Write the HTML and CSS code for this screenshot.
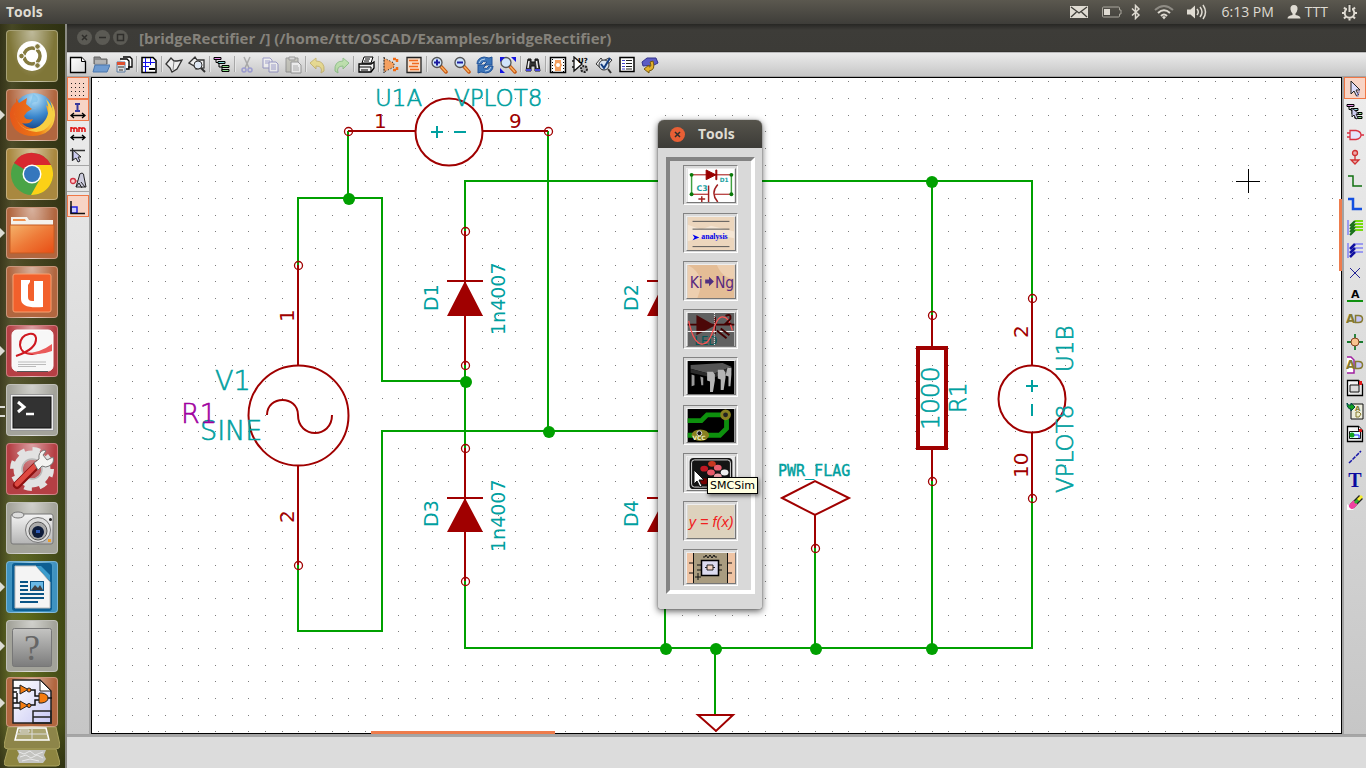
FILE: index.html
```html
<!DOCTYPE html>
<html lang="en">
<head>
<meta charset="utf-8">
<title>Tools</title>
<link rel="stylesheet" href="styles.css">
</head>
<body>
<svg class="defs" aria-hidden="true">
  <defs>
    <linearGradient id="gOrange" x1="0" y1="0" x2="1" y2="1"><stop offset="0" stop-color="#f5b26a"/><stop offset=".5" stop-color="#ee7a38"/><stop offset="1" stop-color="#e84d14"/></linearGradient>
    <linearGradient id="gGray" x1="0" y1="0" x2="0" y2="1"><stop offset="0" stop-color="#c4c4c2"/><stop offset="1" stop-color="#7c7c7c"/></linearGradient>
    <linearGradient id="gSilver" x1="0" y1="0" x2="0" y2="1"><stop offset="0" stop-color="#f4f4f4"/><stop offset="1" stop-color="#b4b4b4"/></linearGradient>
    <linearGradient id="gSheet" x1="0" y1="0" x2="1" y2="1"><stop offset="0" stop-color="#fff"/><stop offset="1" stop-color="#dcdcdc"/></linearGradient>
    <linearGradient id="gFox" x1="0" y1="0" x2="1" y2="0"><stop offset="0" stop-color="#e5571a"/><stop offset=".65" stop-color="#ee7a14"/><stop offset="1" stop-color="#f8d848"/></linearGradient>
    <radialGradient id="gGlobe" cx=".5" cy=".15" r=".9"><stop offset="0" stop-color="#b8e4fa"/><stop offset=".5" stop-color="#3a86cc"/><stop offset="1" stop-color="#0a2a6c"/></radialGradient>
    <linearGradient id="gPaper" x1="0" y1="0" x2="1" y2="1"><stop offset="0" stop-color="#fff"/><stop offset="1" stop-color="#c8c8f4"/></linearGradient>
    <pattern id="grid" x="98" y="81" width="50" height="50" patternUnits="userSpaceOnUse">
      <path fill="#7c7c7c" d="M0 0h1v1h-1zM17 0h1v1h-1zM34 0h1v1h-1zM0 17h1v1h-1zM17 17h1v1h-1zM34 17h1v1h-1zM0 34h1v1h-1zM17 34h1v1h-1zM34 34h1v1h-1z"/>
    </pattern>
    <symbol id="page" viewBox="0 0 18 18"><path d="M1.500 1.500h11l4 4v11h-15z" fill="url(#gSheet)" stroke="#000" stroke-width="1.300"/><path d="M12.500 1.500v4h4" fill="#fff" stroke="#000"/></symbol>
    <symbol id="arrow" viewBox="0 0 18 18"><path d="M5 1v13l3-3 2.500 5 2-1-2.500-5h4z" fill="#dcdcfa" stroke="#222"/><path d="M13 10v3l-2 1 1 3" fill="none" stroke="#8080c0"/></symbol>
    <symbol id="hier" viewBox="0 0 18 18"><path d="M3 4v2.500h3M6 8v3h3M9 11v4h1" fill="none" stroke="#000"/><path d="M1 1.500h7v2h-7z" fill="#e890e8" stroke="#000"/><path d="M5 5.500h7v2h-7z" fill="#8cdcdc" stroke="#000"/><path d="M9 9.500h7v2h-7zM9 13.500h7v2h-7z" fill="#8cdc8c" stroke="#000"/></symbol>
    <symbol id="lens" viewBox="0 0 18 18"><path d="M11 10.500l5 5.500" stroke="#c85a14" stroke-width="3.500" stroke-linecap="round"/><path d="M11 10.500l5 5.500" stroke="#f8b060" stroke-width="1.500"/><circle cx="7" cy="6.500" r="5" fill="#cfe4fa" stroke="#555" stroke-width="1.300"/></symbol>
    <symbol id="ad" viewBox="0 0 18 18"><text x="0" y="13" class="ad-a">A</text><path d="M9.500 5.500h3q4 0 4 3.500t-4 3.500h-3z" fill="#c4c4f6" stroke="#857a30" stroke-width="1.500"/></symbol>
  </defs>
</svg>

<header class="panel">
  <span class="panel-title">Tools</span>
  <div class="indicators">
    <svg width="18" height="12" viewBox="0 0 18 12" class="mail"><path fill="#dfdbd2" d="M0 0h18v12h-18z"/><path d="M1 1l8 6 8-6M1 11l5.500-5M17 11l-5.500-5" fill="none" stroke="#3f3e39" stroke-width="1.300"/></svg>
    <svg width="20" height="12" viewBox="0 0 20 12" class="battery"><path d="M1.500 1h15q1 0 1 1v2h1.500v4h-1.500v2q0 1-1 1h-15q-1 0-1-1v-8q0-1 1-1z" fill="none" stroke="#a9a69d"/><path fill="#dfdbd2" d="M2 3h6v6h-6z"/></svg>
    <svg width="10" height="16" viewBox="0 0 10 16"><path d="M1 4.500l7 6.500-3.500 3.500v-13l3.500 3.500-7 6.500" fill="none" stroke="#dfdbd2" stroke-width="1.500"/></svg>
    <svg width="20" height="16" viewBox="0 0 20 16"><g fill="none" stroke="#dfdbd2" stroke-width="2"><path d="M1 6q9-8 18 0" stroke="#8f8c85"/><path d="M4 9q6-5.500 12 0"/><path d="M7 12q3-3 6 0"/></g><path fill="#dfdbd2" d="M8 13l2-1 2 1-2 2.500z"/></svg>
    <svg width="20" height="16" viewBox="0 0 20 16" class="volume"><path fill="#dfdbd2" d="M0 5.500h3.500l4.500-4v13l-4.500-4h-3.500z"/><path d="M10 5q2.500 3 0 6M13 3q4 5 0 10M16 1q5 7 0 14" fill="none" stroke="#dfdbd2" stroke-width="1.500"/></svg>
    <span class="clock">6:13 PM</span>
    <span class="user"><svg width="14" height="14" viewBox="0 0 14 14"><path fill="#dfdbd2" d="M7 0q4 0 3.500 4.500-.5 2.500-2 4v1.500q5 .5 5 3.500h-13q0-3 5-3.500v-1.500q-1.500-1.500-2-4-.5-4.500 3.500-4.500z"/></svg>TTT</span>
    <svg width="17" height="17" viewBox="0 0 17 17"><circle cx="8.500" cy="9" r="4.800" fill="none" stroke="#dfdbd2" stroke-width="2"/><path d="M8.500 16.500v-2M1 9h2M16 9h-2M3 3.500l2 2M14 3.500l-2 2M3 14.500l2-2M14 14.500l-2-2" stroke="#dfdbd2" stroke-width="2"/><path d="M8.500 0v9" stroke="#46453f" stroke-width="5"/><path d="M8.500 1v7" stroke="#dfdbd2" stroke-width="2"/></svg>
  </div>
</header>

<div class="desktop">
  <nav class="launcher" aria-label="Launcher">
    <button class="tile olive" aria-label="Dash home"><svg viewBox="0 0 52 52"><circle cx="26" cy="26" r="15" fill="#fff"/><circle cx="26" cy="26" r="8" fill="none" stroke="#857b40" stroke-width="3.500"/><path d="M26 26h-12M26 26l6 10.500M26 26l6-10.500" stroke="#fff" stroke-width="1.500"/><g fill="#857b40" stroke="#fff" stroke-width="1"><circle cx="15.500" cy="26" r="2.800"/><circle cx="31.500" cy="16.500" r="2.800"/><circle cx="31.500" cy="35.500" r="2.800"/></g><circle cx="26" cy="26" r="5.500" fill="#fff"/></svg></button>
    <button class="tile copper run" aria-label="Firefox"><svg viewBox="0 0 52 52"><circle cx="28" cy="24" r="20" fill="url(#gGlobe)"/><path d="M27 5q7 3 4 8-7 0-5 5l5 2-8-1z" fill="#7cbfea" opacity=".7"/><path d="M10 9l3 5 8-5-1 6 6 5-5 3-3 4q2 5 9 3-3 6-11 4 5 6 13 5 14-2 13-15l-2-8q4 2 6 7 1-4-2-11 5 5 5 14-1 20-22 21-20 0-23-19-1-9 6-15z" fill="url(#gFox)"/><path d="M40 10q6 14-3 24-8 8-18 6 17 8 26-6 6-12-5-24z" fill="#f7cf43"/><path d="M8 22q3 18 20 20-16 0-20-20z" fill="#f6a04b"/></svg></button>
    <button class="tile gold" aria-label="Google Chrome"><svg viewBox="0 0 52 52"><circle cx="26" cy="26" r="21" fill="#4aa447"/><path d="M26 26L8 15a21 21 0 0 1 37 2h-19z" fill="#d8282f"/><path d="M26 17h19a21 21 0 0 1-20 30l9-16z" fill="#fcd116"/><circle cx="26" cy="26" r="9.500" fill="#fff"/><circle cx="26" cy="26" r="8" fill="#3577bd"/></svg></button>
    <button class="tile copper run" aria-label="Files"><svg viewBox="0 0 52 52"><path d="M5 10h16l2 3h24v8h-42z" fill="#f4f1ec"/><path d="M7 12h12l1 2h-13z" fill="#ef9150"/><path d="M4 18h44v28h-44z" fill="url(#gOrange)" stroke="#c75a20"/></svg></button>
    <button class="tile copper" aria-label="Ubuntu One"><svg viewBox="0 0 52 52"><rect x="7" y="8" width="38" height="38" rx="2" fill="#f2602c" stroke="#f9a070"/><path d="M15 14h9v2l-2 3v12q0 4 4 4h2v-20h9v26q-22 2-22-8z" fill="#fff"/></svg></button>
    <button class="tile red run" aria-label="Document viewer"><svg viewBox="0 0 52 52"><rect x="6" y="5" width="41" height="41" rx="5" fill="#f7f7f7" stroke="#fff"/><path d="M11 46.500h31" stroke="#555"/><path d="M10 31q21-7 20-18-1-5-7-4-9 2-9 11 1 9 12 9 10-1 19-6" fill="none" stroke="#cf1820" stroke-width="2"/><path d="M20 28q14 0 26-9v7q-12 5-26 2z" fill="#ea5a5a"/><path d="M12 37h28M12 39.500h28M12 41.500h18" stroke="#bbb"/></svg></button>
    <button class="tile silver two" aria-label="Terminal"><svg viewBox="0 0 52 52"><rect x="4.500" y="10.500" width="43" height="36" fill="#ededed" stroke="#999"/><rect x="7" y="13" width="38" height="31" fill="#323232" stroke="#111"/><path d="M12 18l6 5-6 5" fill="none" stroke="#fff" stroke-width="3"/><path d="M20 30h8" stroke="#fff" stroke-width="2.500"/></svg></button>
    <button class="tile red" aria-label="System settings"><svg viewBox="0 0 52 52"><g fill="none" stroke="#e2e2e2"><circle cx="26" cy="26" r="14" stroke-width="9"/><circle cx="26" cy="26" r="19.500" stroke-width="5" stroke-dasharray="7.600 7.700"/></g><circle cx="26" cy="26" r="10" fill="none" stroke="#b8b8b8" stroke-width="1.500"/><path d="M11 42l21-21" stroke="#8d1010" stroke-width="8" stroke-linecap="round"/><path d="M11 41l20-20" stroke="#df4a42" stroke-width="5" stroke-linecap="round"/><path d="M28 20l5-4q-1-7 5-9l2 1-3 4 4 5 6-3q2 6-4 9-3 2-7 0l-4 4z" fill="#f4f4f2" stroke="#777"/></svg></button>
    <button class="tile silver" aria-label="Camera"><svg viewBox="0 0 52 52"><rect x="5" y="12" width="42" height="30" rx="2" fill="url(#gSilver)" stroke="#777"/><ellipse cx="12" cy="13" rx="6" ry="3" fill="#ddd" stroke="#777"/><circle cx="32" cy="28" r="12.500" fill="#ddd" stroke="#777"/><circle cx="32" cy="29" r="9" fill="#aaa" stroke="#555"/><circle cx="32" cy="30" r="6" fill="#0c1a38"/><path d="M30 28h4v3h-4z" fill="#2b58b4"/><circle cx="44.500" cy="17.500" r="1.500" fill="#222"/><path d="M42 37h3v3h-3z" fill="#eda02d"/></svg></button>
    <button class="tile blue run" aria-label="LibreOffice Writer"><svg viewBox="0 0 52 52"><rect x="6" y="2" width="40" height="48" rx="3" fill="#0d5f93"/><path d="M9 5h21l14 16v26h-35z" fill="#f4f4f4" stroke="#bcbcbc"/><path d="M30 5l14 15v-6l-9-9z" fill="#3c9ccc"/><path d="M14 21h8M14 25h8M14 29h8M14 33h24M14 37h24M14 41h18" stroke="#0b5485" stroke-width="2"/><rect x="24.500" y="20.500" width="13" height="9" fill="#6ab9e6" stroke="#0b5485"/><path d="M25 29l4-5 3 3 2-3 3 5z" fill="#444"/></svg></button>
    <button class="tile silver run" aria-label="Unknown application"><svg viewBox="0 0 52 52"><rect x="6.500" y="8.500" width="39" height="38" rx="2" fill="url(#gGray)" stroke="#777"/><text x="26" y="40" class="question">?</text></svg></button>
    <button class="tile copper run eeschema" aria-label="Schematic editor"><svg viewBox="0 0 52 50"><path d="M7 3h27l11 11v32h-38z" fill="url(#gPaper)" stroke="#222" stroke-width="1.500"/><path d="M34 3v11h11z" fill="#fff" stroke="#222"/><path d="M7 11h7M7 15h4M7 26h4v-10M7 21h4M11 26h3M7 31h7M24 13h5v6h5M24 28h5v-5h5M41 21h5" fill="none" stroke="#111" stroke-width="1.500"/><path d="M14 8v9l8-4.500zM14 24v9l8-4.500zM33 16v10h3q6-1 6-5t-6-5z" fill="#f57c10" stroke="#222"/><circle cx="23" cy="13" r="2" fill="#f57c10" stroke="#222"/><circle cx="23" cy="28.500" r="2" fill="#f57c10" stroke="#222"/><path d="M27 46v-12h18v12zM27 40h18" fill="none" stroke="#222" stroke-width="1.500"/></svg></button>
    <div class="stack">
      <button aria-label="Workspace switcher"><svg viewBox="0 0 56 22"><path d="M4 0h48l4 18q0 4-4 4h-48q-4 0-4-4z" fill="#8d8549" stroke="#aaa25f"/><path d="M14 1h28l3 12h-34z" fill="#aba572" stroke="#fff" stroke-width="1.500"/><path d="M28 1v12M12 7h32M16 3h9v2h-9z" stroke="#ddd" fill="none"/></svg></button>
      <button aria-label="Trash"><svg viewBox="0 0 56 18"><path d="M4 0h48l4 14q0 3-4 3h-48q-4 0-4-3z" fill="#8d8540" stroke="#aaa25f"/><path d="M13 1l29 0-2 5 2 4-3 4h-24l-2-5 2-4z" fill="#c4c4c0"/><path d="M15 3l5 2 6-3 5 4 8-3M16 8l6-2 5 3 6-3 6 3M18 12l8-2 9 2" stroke="#e8e8e8" fill="none"/></svg></button>
    </div>
  </nav>

  <main class="window">
    <div class="titlebar">
      <button class="win-btn" aria-label="Close"><svg viewBox="0 0 15 15"><path d="M5 5l5 5M10 5l-5 5"/></svg></button>
      <button class="win-btn" aria-label="Minimize"><svg viewBox="0 0 15 15"><path d="M4 7.500h7"/></svg></button>
      <button class="win-btn" aria-label="Maximize"><svg viewBox="0 0 15 15"><path d="M4.500 4.500h6v6h-6z"/></svg></button>
      <h1 class="window-title">[bridgeRectifier /] (/home/ttt/OSCAD/Examples/bridgeRectifier)</h1>
    </div>

    <div class="toolbar" role="toolbar" aria-label="Main toolbar">
      <button aria-label="New"><svg><use href="#page"/></svg></button>
      <button aria-label="Open"><svg viewBox="0 0 18 18"><path d="M2 1h6l1 2h6v5h-13z" fill="#8a8a8a" stroke="#666"/><path d="M3 5h11M3 7h11" stroke="#ddd"/><path d="M1 16l2-7h15l-3 7z" fill="#6f9bd0" stroke="#4a76ac"/></svg></button>
      <button aria-label="Save"><svg viewBox="0 0 18 18"><path d="M8 1h7l2 2v8h-4M5 3h7l2 2v8h-3" fill="#fff" stroke="#000" stroke-width="1.300"/><path d="M2 6h8v10h-8z" fill="#ddd" stroke="#5a7aa0"/><path d="M2 6h8v3h-8z" fill="#e05030"/><path d="M3 11h6M4 14h4" stroke="#333"/></svg></button>
      <hr>
      <button aria-label="Page settings"><svg viewBox="0 0 18 18"><path d="M2 1.500h11l3 3v12h-14z" fill="#fff" stroke="#000" stroke-width="1.500"/><path d="M5.500 2v14M3 6.500h12M3 10.500h6M10.500 2v7" stroke="#1010f0"/><path d="M9 13h6" stroke="#000" stroke-width="2"/></svg></button>
      <hr>
      <button aria-label="Library editor"><svg viewBox="0 0 18 18"><path d="M1 8l5-6 3 3h3l5-1-5 9-5 3-2-4z" fill="#eee" stroke="#333" stroke-width="1.300"/><path d="M9 5l-1 9" stroke="#888"/></svg></button>
      <button aria-label="Library browser"><svg viewBox="0 0 18 18"><path d="M1 7l6-6 2 3h7v8l-8 1-2-3z" fill="#eee" stroke="#333" stroke-width="1.300"/><circle cx="10" cy="9" r="4" fill="#dfe8f4" stroke="#333"/><path d="M13 12l4 4" stroke="#333" stroke-width="2"/></svg></button>
      <hr>
      <button aria-label="Hierarchy"><svg><use href="#hier"/></svg></button>
      <hr>
      <button aria-label="Cut" class="faded"><svg viewBox="0 0 18 18"><path d="M6 1l5 11M12 1l-5 11" stroke="#777" stroke-width="1.500"/><g fill="none" stroke="#6a6ad0" stroke-width="1.500"><circle cx="6" cy="14" r="2"/><circle cx="12" cy="14" r="2"/></g></svg></button>
      <button aria-label="Copy" class="faded"><svg viewBox="0 0 18 18"><path d="M2 2h7l2 2v8h-9z" fill="#fff" stroke="#55a"/><path d="M8 6h7l2 2v8h-9z" fill="#fff" stroke="#55a"/><path d="M4 5h5M4 7h4M10 9h5M10 11h5M10 13h5" stroke="#66b"/></svg></button>
      <button aria-label="Paste" class="faded"><svg viewBox="0 0 18 18"><path d="M2 2h12v14h-12z" fill="#aa9" stroke="#555"/><path d="M5 1h6v3h-6z" fill="#ccc" stroke="#555"/><path d="M7 6h7l3 3v8h-10z" fill="#fff" stroke="#555"/><path d="M9 10h5M9 12h6M9 14h6" stroke="#888"/></svg></button>
      <hr>
      <button aria-label="Undo" class="faded"><svg viewBox="0 0 18 18"><path d="M1 7l6-5v3q9 0 8 10l-3 2q2-7-5-7v3z" fill="#f1d84a" stroke="#b49418"/></svg></button>
      <button aria-label="Redo" class="faded"><svg viewBox="0 0 18 18"><path d="M17 7l-6-5v3q-9 0-8 10l3 2q-2-7 5-7v3z" fill="#a0e280" stroke="#4ca840"/></svg></button>
      <hr>
      <button aria-label="Print"><svg viewBox="0 0 18 18"><path d="M5 7l2-6h9l-2 6z" fill="#fff" stroke="#000"/><path d="M2 8h12l3-2v6l-3 4h-12z" fill="#eee" stroke="#000" stroke-width="1.300"/><path d="M2 11h12v5M8 3h5M7 5h5M4 14h7" fill="none" stroke="#000"/></svg></button>
      <hr>
      <button aria-label="Netlist"><svg viewBox="0 0 18 18"><path d="M2 1v16M2 2l10 5v4l-10 5z" fill="#f4a060" stroke="#111" stroke-dasharray="1 2"/><path d="M11 3h4v3M11 14h4v-3" fill="none" stroke="#f06a14" stroke-width="2.500" stroke-dasharray="3 1"/></svg></button>
      <button aria-label="Annotate"><svg viewBox="0 0 18 18"><path d="M2 1.500h14v15h-14z" fill="#fbdcc4" stroke="#222" stroke-width="1.300"/><path d="M4 4.500h9M7 7.500h7M4 10.500h9M5 13.500h9" stroke="#f06a20" stroke-width="1.500"/></svg></button>
      <hr>
      <button aria-label="Zoom in"><svg viewBox="0 0 18 18"><use href="#lens"/><path d="M4 6.500h6M7 3.500v6" stroke="#1c1ca0" stroke-width="2"/></svg></button>
      <button aria-label="Zoom out"><svg viewBox="0 0 18 18"><use href="#lens"/><path d="M4 6.500h6" stroke="#1c1ca0" stroke-width="2"/></svg></button>
      <button aria-label="Redraw"><svg viewBox="0 0 18 18"><path d="M1 8q0-6 7-7l5 1 3-1v8h-8l3-3q-4-2-6 2zM17 10q0 6-7 7l-5-1-3 1v-8h8l-3 3q4 2 6-2z" fill="#3c74b8" stroke="#205298"/><path d="M3 7q1-4 6-4M15 11q-1 4-6 4" fill="none" stroke="#b8d4f0"/></svg></button>
      <button aria-label="Zoom fit"><svg viewBox="0 0 18 18"><use href="#lens"/><path d="M1 1h5l-5 5zM17 1h-5l5 5zM1 17h5l-5-5z" fill="#1414e0"/></svg></button>
      <hr>
      <button aria-label="Find"><svg viewBox="0 0 18 18"><path d="M4 3h3v3h4v-3h3l2 12h-5v-5h-4v5h-5z" fill="#333" stroke="#111"/><path d="M5 5l-1 7M12.500 5l1 7" stroke="#eee" stroke-width="1.500"/><path d="M2 14h5M11 14h5" stroke="#44d" stroke-width="2"/></svg></button>
      <hr>
      <button aria-label="Netlist generation"><svg viewBox="0 0 18 18"><rect x="1.500" y="1.500" width="15" height="15" fill="#fff" stroke="#000" stroke-width="1.500"/><path d="M6 4h6v3l1 2-1 2v4h-6v-4l-1-2 1-2z" fill="#f4a060"/><path d="M3.500 3v13M14.500 3v13" stroke="#000" stroke-dasharray="1 2"/><circle cx="9" cy="9" r="2" fill="#fff"/></svg></button>
      <button aria-label="Annotate schematic"><svg viewBox="0 0 18 18"><path d="M2 1v14l8-7zM0 5h2M0 11h2" fill="#fff" stroke="#111" stroke-width="1.300"/><text x="6" y="7" class="tiny">U?</text><circle cx="12" cy="13" r="3" fill="#aaa" stroke="#222" stroke-width="2" stroke-dasharray="2 1"/></svg></button>
      <button aria-label="Check electrical rules"><svg viewBox="0 0 18 18"><path d="M1 8l5-6 2 3 6-3 3 2-9 10z" fill="#eee" stroke="#333"/><circle cx="9" cy="9" r="5" fill="#d8e4f2" stroke="#333"/><path d="M6 8l3 4 6-10" fill="none" stroke="#123c80" stroke-width="2"/><path d="M13 13l3 4" stroke="#333" stroke-width="2"/></svg></button>
      <button aria-label="Bill of materials"><svg viewBox="0 0 18 18"><path d="M2 1.500h14v14h-14z" fill="#fff" stroke="#000" stroke-width="1.500"/><path d="M4 4.500h3M4 7.500h3M4 10.500h3M4 13h3" stroke="#44c"/><path d="M8 4.500h6M8 7.500h6M8 10.500h6M8 13h6" stroke="#222"/></svg></button>
      <button aria-label="Back annotate"><svg viewBox="0 0 18 18"><path d="M1 6l5-4h9l2 5-4 2-11 1z" fill="#5c5cc4" stroke="#33338c"/><path d="M12 5q3 9-4 10v2l-5-4 5-4v2q3 0 1-5z" fill="#e4b22c" stroke="#775a10"/></svg></button>
    </div>

    <div class="workspace">
      <div class="side left" role="toolbar" aria-label="Options">
        <button class="on" aria-label="Show grid"><svg viewBox="0 0 18 18"><path d="M2 3.500h14M2 7.500h14M2 11.500h14M2 15.500h14" stroke="#222" stroke-dasharray="1 3"/></svg></button>
        <button class="on" aria-label="Units in inches"><svg viewBox="0 0 18 18"><path d="M6 2h5M6 9h5M8.500 2v7" stroke="#3a3a9c" stroke-width="2"/><path d="M2 13.500h14M5 11l-3 2.500 3 2.500M13 11l3 2.500-3 2.500" fill="none" stroke="#000" stroke-width="1.300"/></svg></button>
        <button aria-label="Units in millimetres"><svg viewBox="0 0 18 18"><path d="M2 8v-5M2 4h2l1 1v3M5 4h2l1 1v3M10 8v-5M10 4h2l1 1v3M13 4h2l1 1v3" fill="none" stroke="#e01010" stroke-width="1.500"/><path d="M2 13.500h14M5 11l-3 2.500 3 2.500M13 11l3 2.500-3 2.500" fill="none" stroke="#000" stroke-width="1.300"/></svg></button>
        <button aria-label="Cursor shape"><svg viewBox="0 0 18 18"><path d="M1 4.500h15M3.500 2v13" stroke="#333" stroke-width="1.300"/><path d="M4 4v10l3-2 2 4 2-1-2-4h3z" fill="#ccccf0" stroke="#222"/></svg></button>
        <hr>
        <button aria-label="Show hidden pins"><svg viewBox="0 0 18 18"><circle cx="4" cy="9" r="2.500" fill="#fcc" stroke="#d03040" stroke-width="1.300"/><path d="M6 9h5" stroke="#d03040"/><path d="M10 5q0-4 3-4 2 0 2 4l2 10h-10z" fill="#ccd" stroke="#222"/><path d="M7 15l3-4 3 5M12 10l4 5" stroke="#222" fill="none"/></svg></button>
        <hr>
        <button class="on" aria-label="Orthogonal lines"><svg viewBox="0 0 18 18"><path d="M2 9h6v6h-6z" fill="#ccf" stroke="#2222e0" stroke-width="1.500"/><path d="M2 3v12.500h14" fill="none" stroke="#111" stroke-width="1.500"/></svg></button>
      </div>

      <div class="canvas">
        <svg class="schematic" viewBox="92 78 1249 655" preserveAspectRatio="xMinYMin meet" role="img" aria-label="Bridge rectifier schematic">
          <rect x="92" y="78" width="1249" height="655" fill="url(#grid)"/>
          <g class="wire">
            <path d="M348 131v67M298 265v-67h84v183h83M548 131v300M465 231v-50h567v117M465 365v83M665 431h-283v200h-84v-66M465 581v67h567v-150M665 581v67M715 648v66M815 548v100M932 181v134M932 481v167"/>
          </g>
          <g class="part">
            <circle cx="449" cy="132" r="33.500"/><path d="M348 131h67M483 131h65"/>
            <circle cx="298.500" cy="415.500" r="50"/><path d="M298 265v100M298 466v99"/>
            <path d="M267 415c0-20 31-20 31 0 0 24 34 24 34 0"/>
            <path d="M465 231v134M447 281h36M465 448v133M447 498h36M647 281h36M647 498h36"/>
            <path d="M782 498l33-17 34 17-34 17zM815 515v33"/>
            <path d="M932 315v32M932 449v32"/><rect class="body" x="918" y="348" width="28" height="100"/>
            <circle cx="1032" cy="399" r="33.500"/><path d="M1032 298v67M1032 432v66"/>
            <path d="M698 715h35l-17 16z"/>
          </g>
          <path class="solid" d="M465 281l18 35h-36zM465 498l18 34h-36zM665 281l18 35h-36zM665 498l18 34h-36z"/>
          <g class="pin"><circle cx="348.500" cy="131.500" r="4"/><circle cx="548.500" cy="131.500" r="4"/><circle cx="298.500" cy="265.500" r="4"/><circle cx="298.500" cy="565.500" r="4"/><circle cx="465.500" cy="231.500" r="4"/><circle cx="465.500" cy="365.500" r="4"/><circle cx="465.500" cy="448.500" r="4"/><circle cx="465.500" cy="581.500" r="4"/><circle cx="815.500" cy="548.500" r="4"/><circle cx="932.500" cy="315.500" r="4"/><circle cx="932.500" cy="481.500" r="4"/><circle cx="1032.500" cy="298.500" r="4"/><circle cx="1032.500" cy="498.500" r="4"/></g>
          <g class="junction"><circle cx="349" cy="199" r="6"/><circle cx="466" cy="382" r="6"/><circle cx="549" cy="432" r="6"/><circle cx="932" cy="182" r="6"/><circle cx="666" cy="649" r="6"/><circle cx="716" cy="649" r="6"/><circle cx="816" cy="649" r="6"/><circle cx="932" cy="649" r="6"/></g>
          <path class="sign" d="M431 132h12M437 126v12M454 132h12M1026 386h12M1032 380v12M1032 404v12"/>
          <g class="label">
            <text class="t23" x="375" y="106">U1A</text>
            <text class="t23" x="454" y="106">VPLOT8</text>
            <text class="t27" x="215" y="390">V1</text>
            <text class="t27" x="200" y="440">SINE</text>
            <text class="t19" transform="translate(438 311) rotate(-90)">D1</text>
            <text class="t19" transform="translate(505 335) rotate(-90)">1n4007</text>
            <text class="t19" transform="translate(438 527) rotate(-90)">D3</text>
            <text class="t19" transform="translate(505 552) rotate(-90)">1n4007</text>
            <text class="t19" transform="translate(638 311) rotate(-90)">D2</text>
            <text class="t19" transform="translate(638 527) rotate(-90)">D4</text>
            <text class="t25" transform="translate(939 430) rotate(-90)">1000</text>
            <text class="t23" transform="translate(966 413) rotate(-90)">R1</text>
            <text class="t23" transform="translate(1073 372) rotate(-90)">U1B</text>
            <text class="t23" transform="translate(1073 493) rotate(-90)">VPLOT8</text>
            <text class="flag" x="778" y="476">PWR_FLAG</text>
            <text class="t27 purple" x="181" y="423">R1</text>
          </g>
          <g class="number">
            <text x="374" y="128">1</text><text x="509" y="128">9</text>
            <text transform="translate(294 322) rotate(-90)">1</text>
            <text transform="translate(294 523) rotate(-90)">2</text>
            <text transform="translate(1028 338) rotate(-90)">2</text>
            <text transform="translate(1028 478) rotate(-90)">10</text>
          </g>
          <path class="cross" d="M1236 181.500h24M1248.500 169v24"/>
        </svg>
        <div class="scroll-v"></div>
        <div class="scroll-h"></div>
      </div>

      <div class="side right" role="toolbar" aria-label="Drawing tools">
        <button class="on" aria-label="Select"><svg><use href="#arrow"/></svg></button>
        <button aria-label="Navigate hierarchy"><svg viewBox="0 0 18 18"><use href="#hier"/><path d="M6 5v9l2-2 2 4 2-1-2-4h3z" fill="#ccccf0" stroke="#222"/></svg></button>
        <button aria-label="Place component"><svg viewBox="0 0 18 18"><path d="M4 4.500h6q5 1 5 4.500t-5 4.500h-6zM1 7h3M1 11h3M15 9h3" fill="#e4e4fa" stroke="#d83040" stroke-width="1.300"/></svg></button>
        <button aria-label="Place power port"><svg viewBox="0 0 18 18"><circle cx="9" cy="4" r="2.500" fill="#eaa" stroke="#d03030" stroke-width="1.300"/><path d="M9 6v5M5 11h8l-4 4z" fill="#e8b0b0" stroke="#d03030" stroke-width="1.300"/></svg></button>
        <button aria-label="Place wire"><svg viewBox="0 0 18 18"><path d="M2 4h5v10h9" fill="none" stroke="#107010" stroke-width="1.500"/></svg></button>
        <button aria-label="Place bus"><svg viewBox="0 0 18 18"><path d="M2 4h5v10h9" fill="none" stroke="#1450e0" stroke-width="2.500"/></svg></button>
        <button aria-label="Wire to bus entry"><svg viewBox="0 0 18 18"><path d="M2 2v15" stroke="#9a9af0" stroke-width="2"/><path d="M9 3h8M9 6h8M9 9h8M9 12h8" stroke="#78dc10" stroke-width="2"/><path d="M4 8l5-5M4 11l5-5M4 14l5-5M4 17l5-5" stroke="#187018" stroke-width="2"/></svg></button>
        <button aria-label="Bus to bus entry"><svg viewBox="0 0 18 18"><path d="M2 2v15M9 3h8M9 7h8M9 11h8" stroke="#9a9af0" stroke-width="2"/><path d="M4 8l5-5M4 12l5-5M4 16l5-5" stroke="#1010a0" stroke-width="2.500"/></svg></button>
        <button aria-label="No connect"><svg viewBox="0 0 18 18"><path d="M4 4l10 10M14 4l-10 10" stroke="#222294"/></svg></button>
        <button aria-label="Net name"><svg viewBox="0 0 18 18"><text x="5" y="11" class="net">A</text><path d="M1 14h16" stroke="#109010" stroke-width="2"/></svg></button>
        <button aria-label="Global label"><svg><use href="#ad"/></svg></button>
        <button aria-label="Place junction"><svg viewBox="0 0 18 18"><path d="M9 1v16M1 9h16" stroke="#187a30" stroke-width="1.800"/><circle cx="9" cy="9" r="4" fill="#f8c490" stroke="#884020"/></svg></button>
        <button aria-label="Hierarchical label"><svg viewBox="0 0 18 18"><path d="M1 1h4l3 3v13h-7" fill="#fff" stroke="#a020a0" stroke-width="1.500"/><use href="#ad"/></svg></button>
        <button aria-label="Hierarchical sheet"><svg viewBox="0 0 18 18"><use href="#page"/><path d="M4 6h9v7h-9z" fill="#ddd" stroke="#111"/><path d="M13 2h3v4h-3z" fill="#e01818"/></svg></button>
        <button aria-label="Import sheet label"><svg viewBox="0 0 18 18"><path d="M5 2h12v15h-12z" fill="#eed" stroke="#111"/><text x="9" y="9" class="tiny olive-text">A</text><path d="M10 10h3l2 2-2 3h-3z" fill="#eec" stroke="#857a30"/><path d="M1 1q1 3 4 2v-2l4 4-4 4v-2q-4 0-4-6z" fill="#10a020" stroke="#044"/></svg></button>
        <button aria-label="Place sheet pin"><svg viewBox="0 0 18 18"><use href="#page"/><path d="M3.500 6.500h11v7h-11z" fill="#dff" stroke="#111"/><circle cx="6" cy="10" r="2.500" fill="#10a020"/><path d="M8 10h5v3" fill="none" stroke="#22f"/><path d="M13 4h3v3h-3z" fill="#d81818"/></svg></button>
        <button aria-label="Draw line"><svg viewBox="0 0 18 18"><path d="M3 15l12-12" stroke="#1818a8" stroke-width="1.500" stroke-dasharray="4 1"/></svg></button>
        <button aria-label="Place text"><svg viewBox="0 0 18 18"><text x="9" y="16" class="big-t">T</text></svg></button>
        <button aria-label="Delete"><svg viewBox="0 0 18 18"><path d="M1 10v6h7z" fill="#fff"/><path d="M6 12l9-9" stroke="#222" stroke-width="5.500"/><path d="M6 12l2-2" stroke="#f040a0" stroke-width="6" stroke-linecap="round"/><path d="M9 9l3-3" stroke="#30b030" stroke-width="3"/><path d="M12 6l4-4" stroke="#f4ee30" stroke-width="3"/></svg></button>
      </div>
    </div>
    <footer class="statusbar"></footer>
  </main>
</div>

<section class="dialog" aria-label="Tools">
  <div class="dialog-title"><button class="close" aria-label="Close tools"><svg viewBox="0 0 15 15"><path d="M5 5l5 5M10 5l-5 5"/></svg></button><h2>Tools</h2></div>
  <div class="dialog-body">
    <div class="frame">
      <button aria-label="Schematic editor"><svg viewBox="0 0 48 34"><path fill="#fff" d="M0 0h48v34h-48z"/><path d="M4 6v20M45 6v20" stroke="#40a040" stroke-width="1.500"/><path d="M4 6h41M4 26h17M28 26h17" stroke="#a00000"/><path d="M19 1v10l10-5zM29 1v10h1v-10z" fill="#900" stroke="#900"/><path d="M21.500 17v17M31 16q-8 9 0 18M11 31h7M14.500 28v6" fill="none" stroke="#a02020" stroke-width="1.500"/><g fill="#0a7a0a"><circle cx="4" cy="6" r="2"/><circle cx="45" cy="6" r="2"/><circle cx="4" cy="26" r="2"/><circle cx="45" cy="26" r="2"/></g><text x="9" y="23" class="mini teal">C3</text><text x="33" y="13" class="micro teal">D1</text></svg></button>
      <button aria-label="Analysis"><svg viewBox="0 0 48 34"><path fill="#ecd6bd" d="M0 0h48v34h-48z"/><path d="M0 8l14 5 10-4 24 6v7l-20-4-28 7z" fill="#f5e6d4"/><path d="M5 4.500h38M5 12.500h38M5 30.500h38" stroke="#555"/><path d="M5 18l7 3-7 3 2-3z" fill="#00e"/><text x="14" y="23" class="mini analysis">analysis</text></svg></button>
      <button aria-label="KiCad to Ngspice"><svg viewBox="0 0 48 34"><path fill="#e4bd96" d="M0 0h48v34h-48z"/><path d="M0 0q20 10 10 34h-10zM30 0h18v14q-12 0-18-14z" fill="#edcfb0"/><path d="M18 15h4v-3l5 5-5 5v-3h-4z" fill="#503080"/><text x="2" y="24" class="king">Ki</text><text x="28" y="24" class="king">Ng</text></svg></button>
      <button aria-label="Ngspice"><svg viewBox="0 0 48 34"><path fill="#616161" d="M0 0h48v34h-48z"/><path d="M0 12h48M28 4v18" stroke="#400" stroke-width="2"/><path d="M9 2v21l19-10z" fill="#4c0808"/><text x="7" y="33" class="led">LED</text><path d="M0 19h48" stroke="#fff"/><path d="M27.500 0v34" stroke="#fff" stroke-dasharray="1 1"/><path d="M1 8q5 24 14 24c12 0 11-28 21-28 7 0 9 10 10 14" fill="none" stroke="#ff5252" stroke-width="1.300"/><path d="M30 18l10 8M34 16l9 7M39 3q6-3 5 3l-5 5h6" fill="none" stroke="#400" stroke-width="2"/></svg></button>
      <button aria-label="Footprints"><svg viewBox="0 0 48 34"><path fill="#000" d="M0 0h48v34h-48z"/><path d="M3 4l33-2 9 4-20 8-22-6z" fill="#555"/><path d="M3 8l22 6v3l-22-5zM25 14l20-8v4l-20 8z" fill="#2c2c2c"/><path d="M4 14l3 1v10l-3 1zM13 16l3 1v8h-2z" fill="#999"/><path d="M20 11h6l2 3v6l-2 12h-3v-11l-3-1zM31 9h6l2 3v5l-2 13h-3v-11l-3-1zM41 7h4v7l-1 12h-2v-10l-3-1z" fill="#b4b4b4"/></svg></button>
      <button aria-label="PCB editor"><svg viewBox="0 0 48 34"><path fill="#000" d="M0 0h48v34h-48z"/><path d="M0 12h14l6-6h20v14l-7 7h-33" fill="none" stroke="#0d900d" stroke-width="5"/><circle cx="39" cy="6" r="5.500" fill="#888020"/><circle cx="39" cy="6" r="2.500" fill="#222"/><ellipse cx="13" cy="27" rx="9" ry="6" fill="#888020"/><text x="5" y="32" class="micro cream">VCC</text><circle cx="12" cy="25" r="2.500" fill="#111" stroke="#ddd"/></svg></button>
      <button class="smc" aria-label="SMCSim"><svg viewBox="0 0 48 34"><path fill="#e8e8e8" d="M0 0h48v34h-48z"/><rect x="2" y="1" width="44" height="32" rx="4" fill="#141414"/><rect x="4" y="3" width="40" height="28" rx="3" fill="none" stroke="#ddd"/><ellipse cx="25" cy="7" rx="4" ry="3" fill="#c83820"/><ellipse cx="17" cy="12" rx="4" ry="3" fill="#c01822"/><ellipse cx="31" cy="11" rx="4" ry="3" fill="#ea6070"/><ellipse cx="24" cy="16" rx="4" ry="3" fill="#e85868"/><ellipse cx="38" cy="16" rx="4" ry="3" fill="#eee"/><ellipse cx="31" cy="20" rx="4" ry="3" fill="#eea0a8"/><ellipse cx="17" cy="25" rx="4" ry="3" fill="#700"/></svg><span class="tip" role="tooltip">SMCSim</span><svg class="pointer" viewBox="0 0 12 18"><path d="M1 1v14l3-3 3 6 2-1-3-6h5z" fill="#fff" stroke="#111"/></svg></button>
      <button aria-label="Equations"><svg viewBox="0 0 48 34"><path fill="#ddd2bd" d="M0 0h48v34h-48z"/><text x="1" y="23" class="fx">y = f(x)</text></svg></button>
      <button class="last" aria-label="Subcircuit"><svg viewBox="0 0 48 30"><path fill="#efc4a4" d="M0 0h48v30h-48z"/><path fill="#a99c80" d="M6 0h34v30h-34z"/><path d="M6.500 0v30M40.500 0v30M2 10h5M2 20h5M40 10h5M40 20h5M10 12h5M10 17h5M31 12h4M31 17h4M16 4h2l1-2 2 3 2-3 2 3 2-3 1 2h2M11 20v7M8 24h6" fill="none" stroke="#111"/><path d="M14.500 7.500h17v15h-17z" fill="#dcdcf0" stroke="#000" stroke-width="1.500"/><path d="M20 12h6v5h-6zM18 14.500h2M26 14.500h2" fill="#f4d4c0" stroke="#222"/></svg></button>
    </div>
  </div>
</section>
</body>
</html>
```
FILE: styles.css
```css
* { box-sizing: border-box; }
html, body { height: 100%; }
body {
  margin: 0;
  display: flex;
  flex-direction: column;
  overflow: hidden;
  position: relative;
  font-family: "Open Sans", "Noto Sans", sans-serif;
  background: #3c3b37;
}
button { border: 0; padding: 0; margin: 0; background: none; display: block; }
button svg { display: block; }
h1, h2 { margin: 0; }
hr { border: 0; margin: 0; }
.defs { position: absolute; width: 0; height: 0; }

/* Top panel */
.panel {
  flex: none;
  height: 24px;
  display: flex;
  align-items: center;
  justify-content: space-between;
  padding: 0 8px 0 6px;
  color: #dfdbd2;
  background: linear-gradient(#5b584f, #3e3d39);
}
.panel-title { font-size: 14px; font-weight: 700; line-height: 24px; }
.indicators { display: flex; align-items: center; gap: 13px; font-size: 14px; line-height: 24px; }
.mail { margin-right: 1px; }
.battery { margin-right: -4px; }
.volume { margin-right: 2px; }
.user { display: flex; align-items: center; gap: 4px; }

.desktop { flex: 1; min-height: 0; display: flex; }

/* Launcher */
.launcher {
  flex: none;
  width: 65px;
  padding: 6px 0 0 6px;
  display: flex;
  flex-direction: column;
  gap: 7px;
  overflow: hidden;
  background:
    linear-gradient(90deg, #2a271580, #69674840 12px, transparent 24px, #20240a80),
    linear-gradient(#3b3d19, #4b4822 30%, #55572f 55%, #5f6c1c 80%, #666e22 94%, #3d4018);
}
.tile {
  flex: none;
  position: relative;
  width: 52px;
  height: 52px;
  border-radius: 4px;
  border: 1px solid #ffffff50;
  background-image: radial-gradient(ellipse at 50% 0, #ffffff80, #ffffff00 65%);
}
.tile svg { width: 52px; height: 52px; margin: -1px; }
.olive { background-color: #7f7638; }
.copper { background-color: #b1663f; }
.gold { background-color: #a9883f; }
.red { background-color: #b53f44; }
.silver { background-color: #a3a39a; }
.blue { background-color: #3e92c0; }
.run::before {
  content: "";
  position: absolute;
  left: -7px;
  top: 20px;
  border: 5px solid transparent;
  border-left-color: #dcdcd4;
  border-right: 0;
}
.two::before {
  content: "";
  position: absolute;
  left: -7px;
  top: 21px;
  width: 5px;
  height: 7px;
  border: solid #dcdcd4;
  border-width: 2px 0;
}
.eeschema { height: 50px; margin-top: -2px; }
.eeschema svg { height: 50px; }
.question { font: 36px "Liberation Serif", serif; fill: #666; text-anchor: middle; }
.stack { margin: -7px 0 0 -2px; }
.stack svg { width: 56px; height: 22px; }
.stack button + button svg { height: 18px; }

/* Editor window */
.window { flex: 1; min-width: 0; display: flex; flex-direction: column; border-left: 2px solid #8a8a84; background: #a3a3a3; }
.titlebar {
  flex: none;
  height: 28px;
  display: flex;
  align-items: center;
  gap: 3px;
  padding-left: 10px;
  background: linear-gradient(#272724, #3d3c38 6px, #3c3b37);
  border-bottom: 1px solid #33322f;
}
.win-btn, .close { width: 15px; height: 15px; border-radius: 50%; background: #5b5a54; }
.win-btn svg, .close svg { width: 15px; height: 15px; fill: none; stroke: #2f2e2b; stroke-width: 1.500; }
.window-title { margin-left: 8px; font-size: 15px; line-height: 20px; color: #85827b; white-space: nowrap; }
.toolbar {
  flex: none;
  height: 24px;
  display: flex;
  align-items: center;
  border-top: 1px solid #bbb;
  background: linear-gradient(#ebebeb, #c6c6c6);
}
.toolbar button { width: 23px; height: 22px; padding: 1px 0 0 2px; }
.toolbar { padding-bottom: 1px; }
.toolbar svg, .side svg { width: 18px; height: 18px; }
.toolbar hr { width: 2px; height: 16px; background: #a8a8a8; border-right: 1px solid #e6e6e6; }
.faded { opacity: .5; }
.tiny { font: 700 7px "DejaVu Sans", sans-serif; }
.olive-text, .ad-a { fill: #857a30; }
.ad-a { font: 700 12px "DejaVu Sans", sans-serif; }
.net { font: 700 11px "DejaVu Sans", sans-serif; }
.big-t { font: 700 20px "Liberation Serif", serif; fill: #0a0aa0; text-anchor: middle; }

.workspace { flex: 1; min-height: 0; display: flex; padding-top: 1px; }
.side { flex: none; width: 22px; background: linear-gradient(#ededed, #c6c6c6); }
.side svg { overflow: visible; }
.side button { width: 22px; height: 23px; padding: 2px 0 0 2px; }
.left { margin-right: 2px; }
.left button { height: 22px; }
.right { margin-left: 2px; }
.side .on { height: 22px; padding: 1px 0 0 1px; border: 1px solid #f07746; background: #f8d4c5; }
.side hr { height: 4px; border-top: 1px solid #a6a6a6; }

.canvas { flex: 1; min-width: 0; position: relative; border: 1px solid #000; background: #fff; }
.schematic { display: block; width: 100%; height: 100%; }
.scroll-v { position: absolute; right: -1px; top: 18.500%; width: 3px; height: 11%; background: #ee7c4c; }
.scroll-h { position: absolute; bottom: -1px; left: 22.300%; width: 14.800%; height: 3px; background: #ee7c4c; }
.statusbar { flex: none; height: 33px; margin-top: 1px; border-top: 2px solid #a6a6a6; background: #dcdcdc; }

/* Schematic */
.wire { fill: none; stroke: #00a000; stroke-width: 2; }
.part { fill: none; stroke: #a00000; stroke-width: 2; }
.part .body { stroke-width: 4; }
.solid { fill: #a00000; }
.pin { fill: none; stroke: #a00000; stroke-width: 1.300; }
.junction { fill: #00a000; }
.sign { stroke: #00a0a0; stroke-width: 2; }
.cross { stroke: #000; }
.label, .number { font-family: "DejaVu Sans", sans-serif; fill: #00a0a0; }
.number { font-size: 20px; fill: #a00000; }
.t19 { font-size: 19px; }
.t23 { font-size: 23px; font-weight: 200; stroke: #00a0a0; stroke-width: .6px; }
.t25 { font-size: 25px; font-weight: 200; stroke: #00a0a0; stroke-width: .6px; }
.t27 { font-size: 27px; font-weight: 200; stroke: #00a0a0; stroke-width: .6px; }
.flag { font: 15px "DejaVu Sans Mono", monospace; stroke: #00a0a0; stroke-width: .4px; }
.purple { fill: #a000a0; stroke: #a000a0; }

/* Tools dialog */
.dialog {
  position: absolute;
  left: 658px;
  top: 120px;
  width: 104px;
  border-radius: 6px 6px 2px 2px;
  background: #d9d9d9;
  box-shadow: 0 2px 7px #000a, 0 0 1px #333;
}
.dialog-title {
  display: flex;
  align-items: center;
  gap: 13px;
  height: 28px;
  padding-left: 12px;
  border-radius: 6px 6px 0 0;
  background: linear-gradient(#56544c, #3c3b37);
  color: #dfdbd2;
}
.dialog-title h2 { font-size: 14px; line-height: 28px; }
.close { background: #e85f35; }
.dialog-body { padding: 9px 7px 15px 8px; }
.frame {
  display: flex;
  flex-direction: column;
  align-items: center;
  gap: 8px;
  padding: 4px 0 4px;
  border: 4px solid;
  border-color: #838383 #fff #fff #838383;
}
.frame button {
  position: relative;
  width: 55px;
  height: 40px;
  padding: 2px;
  border: 1px solid;
  border-color: #838383 #fff #fff #838383;
}
.frame button > svg:first-child { width: 50px; height: 35px; border: 1px solid; border-color: #eee #777 #777 #eee; }
.frame .last { height: 37px; }
.frame .last > svg:first-child { height: 32px; }
.frame .pointer { position: absolute; left: 9px; top: 15px; width: 12px; height: 18px; }
.tip {
  position: absolute;
  left: 23px;
  top: 23px;
  z-index: 1;
  padding: 0 2px;
  border: 1px solid #000;
  background: #ffffe1;
  color: #000;
  font: 11px/15px "DejaVu Sans", sans-serif;
  box-shadow: 1px 2px 4px #0008;
}
.mini { font: 700 8px "DejaVu Sans", sans-serif; }
.micro { font: 700 6px "DejaVu Sans", sans-serif; }
.teal { fill: #18a0a0; }
.cream { fill: #f4f0c0; }
.analysis { font-family: "Liberation Serif", serif; fill: #00e; }
.king { font: 16px "DejaVu Sans Condensed", "Liberation Sans", sans-serif; fill: #5a2a80; }
.led { font: 12px "DejaVu Sans", sans-serif; fill: #045858; }
.fx { font: italic 15px "Liberation Sans", sans-serif; fill: #f02020; }
```
